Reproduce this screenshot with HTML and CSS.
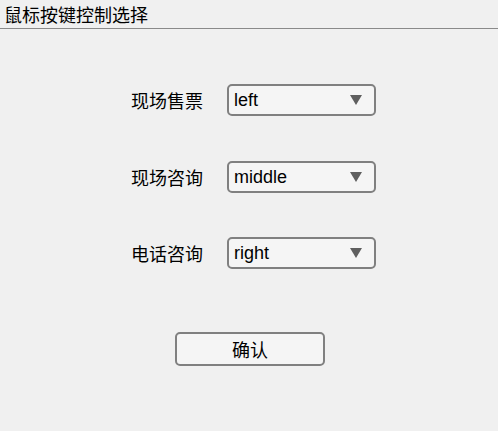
FILE: index.html
```html
<!DOCTYPE html>
<html>
<head>
<meta charset="utf-8">
<link rel="stylesheet" href="styles.css">
</head>
<body>
<div class="title">鼠标按键控制选择</div>
<div class="main">
  <div class="row r1">
    <span class="label">现场售票</span>
    <div class="select"><span class="val">left</span><span class="arrow"></span></div>
  </div>
  <div class="row r2">
    <span class="label">现场咨询</span>
    <div class="select"><span class="val">middle</span><span class="arrow"></span></div>
  </div>
  <div class="row r3">
    <span class="label">电话咨询</span>
    <div class="select"><span class="val">right</span><span class="arrow"></span></div>
  </div>
  <div class="btnrow"><div class="btn">确认</div></div>
</div>
</body>
</html>
```
FILE: styles.css
```css
html, body {
  margin: 0;
  padding: 0;
  background: #f0f0f0;
  width: 498px;
  height: 431px;
  overflow: hidden;
  font-family: "Liberation Sans", Arial, "Noto Sans CJK SC", sans-serif;
  color: #000;
}
.title {
  height: 28px;
  border-bottom: 1px solid #8a8a8a;
  box-sizing: content-box;
  padding-left: 4px;
  font-size: 18px;
  line-height: 28px;
  font-family: "Noto Sans CJK SC", sans-serif;
}
.main {
  display: flex;
  flex-direction: column;
}
.row {
  display: flex;
  align-items: center;
  padding-left: 131px;
}
.r1 { margin-top: 55px; }
.r2 { margin-top: 45px; }
.r3 { margin-top: 44px; }
.label {
  width: 96px;
  font-size: 18px;
  font-family: "Noto Sans CJK SC", sans-serif;
}
.select {
  width: 149px;
  height: 32px;
  box-sizing: border-box;
  border: 2px solid #808080;
  border-radius: 5px;
  background: #f5f5f5;
  display: flex;
  align-items: center;
  justify-content: space-between;
  padding: 0 12px 0 5px;
}
.val {
  font-size: 18px;
}
.arrow {
  width: 0;
  height: 0;
  border-left: 6px solid transparent;
  border-right: 6px solid transparent;
  border-top: 10px solid #5f5f5f;
}
.btnrow {
  display: flex;
  padding-left: 175px;
  margin-top: 63px;
}
.btn {
  width: 150px;
  height: 34px;
  box-sizing: border-box;
  border: 2px solid #808080;
  border-radius: 5px;
  background: #f5f5f5;
  font-size: 18px;
  font-family: "Noto Sans CJK SC", sans-serif;
  display: flex;
  align-items: center;
  justify-content: center;
}
```
